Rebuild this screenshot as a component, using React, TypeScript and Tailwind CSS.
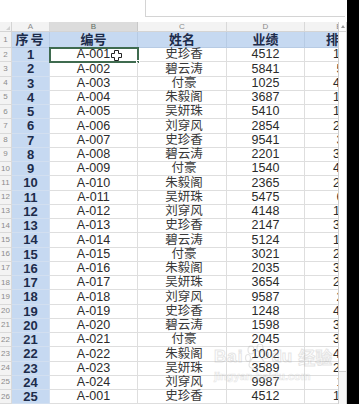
import React from "react";

type Row = {
  no: number;
  code: string;
  name: string;
  score: number;
  rank: string;
};

const names = ["史珍香", "碧云涛", "付豪", "朱毅阁", "吴妍珠", "刘穿风"];
const scores = [
  4512, 5841, 1025, 3687, 5410, 2854, 9541, 2201, 1540, 2365, 5475, 4148, 2147,
  5124, 3021, 2035, 3654, 9587, 1248, 1598, 2045, 1002, 3589, 9987, 4512,
];
const ranks = [
  "12", "5", "42", "13", "15", "23", "3", "34", "41", "22", "6", "13", "32",
  "14", "24", "34", "25", "2", "43", "35", "36", "45", "21", "1", "12",
];

const rows: Row[] = scores.map((score, i) => ({
  no: i + 1,
  code: i === 24 ? "A-001" : `A-${String(i + 1).padStart(3, "0")}`,
  name: names[i % 6],
  score,
  rank: ranks[i],
}));

function Cursor() {
  return (
    <svg
      width="11"
      height="11"
      viewBox="0 0 11 11"
      className="absolute left-[61px] top-[2px]"
    >
      <path
        d="M3.5 0.5h4v3h3v4h-3v3h-4v-3h-3v-4h3z"
        fill="#fff"
        stroke="#222"
        strokeWidth="1"
      />
    </svg>
  );
}

function HeaderLetters() {
  return (
    <div className="flex h-[10px] shrink-0 w-max text-[8px] leading-none text-[#8c8c8c] bg-[#f3f3f3] border-b border-[#d4d4d4]">
      <div className="w-[12px] h-full border-r border-[#d4d4d4] relative">
        <div className="absolute right-[1px] bottom-[1px] w-0 h-0 border-l-[4px] border-l-transparent border-b-[4px] border-b-[#d0d0d0]" />
      </div>
      <div className="w-[38px] h-full border-r border-[#d9d9d9] flex items-center justify-center">A</div>
      <div className="w-[88px] h-full border-r border-[#c8c8c8] bg-[#dcdcdc] flex items-center justify-center text-[#5f6f63]">B</div>
      <div className="w-[89px] h-full border-r border-[#d9d9d9] flex items-center justify-center">C</div>
      <div className="w-[78px] h-full border-r border-[#d9d9d9] flex items-center justify-center">D</div>
      <div className="w-[68px] h-full flex items-center justify-center">E</div>
    </div>
  );
}

function TitleRow() {
  return (
    <div className="flex h-[16px] shrink-0 w-max text-[13px] font-bold text-[#1d2c4b] leading-none">
      <div className="w-[12px] h-full bg-[#f3f3f3] border-r border-b border-[#d4d4d4] flex items-center justify-center text-[8px] font-normal text-[#8c8c8c]">
        1
      </div>
      <div className="w-[38px] h-full bg-[#c6d9f1] border-r border-b border-[#b7cbe4] flex items-center justify-center tracking-[2px]">
        序号
      </div>
      <div className="w-[88px] h-full bg-[#c6d9f1] border-r border-b border-[#b7cbe4] flex items-center justify-center">
        编号
      </div>
      <div className="w-[89px] h-full bg-[#c6d9f1] border-r border-b border-[#b7cbe4] flex items-center justify-center">
        姓名
      </div>
      <div className="w-[78px] h-full bg-[#c6d9f1] border-r border-b border-[#b7cbe4] flex items-center justify-center">
        业绩
      </div>
      <div className="w-[68px] h-full bg-[#c6d9f1] border-b border-[#b7cbe4] flex items-center justify-center">
        排名
      </div>
    </div>
  );
}

function DataRow({ row, index }: { row: Row; index: number }) {
  const selected = index === 0;
  return (
    <div className="flex h-[14.25px] shrink-0 w-max leading-none">
      <div className="w-[12px] h-full bg-[#f3f3f3] border-r border-b border-[#dadada] flex items-center justify-center text-[8px] text-[#8c8c8c]">
        {index + 2}
      </div>
      <div className="w-[38px] h-full bg-[#c6d9f1] border-r border-b border-[#d2dff0] flex items-center justify-center text-[13px] font-bold text-[#1d2c4b]">
        {row.no}
      </div>
      <div className="w-[88px] h-full border-r border-b border-[#dedede] relative flex items-center justify-center text-[12.5px] text-[#2b2b2b]">
        {row.code}
        {selected && (
          <>
            <div className="absolute -left-[1px] -top-[1px] w-[90px] h-[16px] border-2 border-[#3f6b4f]" />
            <div className="absolute -right-[3px] -bottom-[3px] w-[4px] h-[4px] bg-[#3f6b4f] border border-white" />
            <Cursor />
          </>
        )}
      </div>
      <div className="w-[89px] h-full border-r border-b border-[#dedede] flex items-center justify-center text-[12.5px] text-[#3a3a3a] pl-[4px]">
        {row.name}
      </div>
      <div className="w-[78px] h-full border-r border-b border-[#dedede] flex items-center justify-center text-[12.5px] text-[#2b2b2b]">
        {row.score}
      </div>
      <div className="w-[68px] h-full border-b border-[#dedede] flex items-center justify-center text-[12.5px] text-[#2b2b2b] pl-[2px]">
        {row.rank}
      </div>
    </div>
  );
}

function Watermark() {
  return (
    <div className="absolute left-[214px] top-[322px] flex flex-col items-start pointer-events-none opacity-25">
      <div className="flex items-center gap-[2px]">
        <span className="text-[17px] font-bold text-white [-webkit-text-stroke:1px_#9a9a9a] tracking-[1px]">Bai</span>
        <svg width="24" height="26" viewBox="0 0 24 26">
          <g fill="none" stroke="#9a9a9a" strokeWidth="1.2">
            <ellipse cx="6" cy="6" rx="3" ry="4" />
            <ellipse cx="15" cy="4" rx="3" ry="4" />
            <ellipse cx="21" cy="11" rx="2.5" ry="3.5" />
            <ellipse cx="3" cy="14" rx="2.5" ry="3.5" />
            <path d="M12 12c-4 0-8 6-8 9s3 4 8 3 8 0 8-3-4-9-8-9z" />
          </g>
        </svg>
        <span className="text-[17px] font-bold text-white [-webkit-text-stroke:1px_#9a9a9a]">du</span>
        <span className="ml-[4px] text-[17px] font-bold text-white [-webkit-text-stroke:1px_#9a9a9a] font-['Noto_Sans_CJK_SC',sans-serif]">经验</span>
      </div>
      <span className="text-[11px] font-bold text-white [-webkit-text-stroke:0.6px_#9a9a9a] -mt-[2px]">
        jingyan.baidu.com
      </span>
    </div>
  );
}

function Scrollbar() {
  return (
    <div className="w-[9px] shrink-0 flex flex-col bg-[#f4f4f4] border-l border-r border-[#cfcfcf]">
      <div className="h-[10px] shrink-0 bg-white border-b border-[#d6d6d6] flex items-center justify-center">
        <div className="w-0 h-0 border-l-[2px] border-l-transparent border-r-[2px] border-r-transparent border-b-[3px] border-b-[#9a9a9a]" />
      </div>
      <div className="h-[340px] shrink-0 bg-white border-b border-[#d0d0d0]" />
      <div className="flex-1 bg-[#f7f7f7]" />
    </div>
  );
}

export default function App() {
  return (
    <div className="w-[359px] h-[404px] flex bg-black overflow-hidden font-['Liberation_Sans','Noto_Sans_CJK_SC',sans-serif]">
      <div className="w-[347px] shrink-0 flex flex-col bg-white">
        <div className="h-[22px] shrink-0 flex">
          <div className="ml-[145px] w-[200px] h-[17px] border-l border-b border-[#d4d4d4]" />
        </div>
        <div className="flex flex-1 min-h-0">
          <div className="w-[338px] shrink-0 overflow-hidden flex flex-col relative">
            <HeaderLetters />
            <TitleRow />
            {rows.map((row, i) => (
              <DataRow key={i} row={row} index={i} />
            ))}
            <Watermark />
          </div>
          <Scrollbar />
        </div>
      </div>
      <div className="flex-1 bg-black" />
    </div>
  );
}
